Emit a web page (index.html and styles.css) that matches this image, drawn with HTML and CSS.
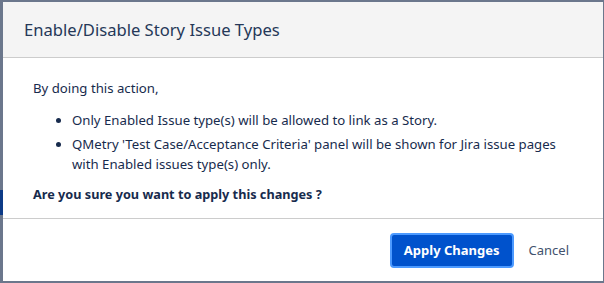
FILE: index.html
```html
<!DOCTYPE html>
<html lang="en">
<head>
    <meta charset="UTF-8">
    <meta name="viewport" content="width=device-width, initial-scale=1.0">
    <title>Enable/Disable Story Issue Types</title>
    <link rel="stylesheet" href="styles.css">
</head>
<body>

<div class="backdrop">
    <div class="backdrop-bar"></div>
    <div class="dialog">
        <div class="dialog-header">
            <h2>Enable/Disable Story Issue Types</h2>
        </div>
        <div class="dialog-body">
            <p>By doing this action,</p>
            <ul>
                <li>Only Enabled Issue type(s) will be allowed to link as a Story.</li>
                <li>QMetry 'Test Case/Acceptance Criteria' panel will be shown for Jira issue pages with Enabled issues type(s) only.</li>
            </ul>
            <p class="confirm">Are you sure you want to apply this changes ?</p>
        </div>
        <div class="dialog-footer">
            <button class="btn-primary">Apply Changes</button>
            <button class="btn-link">Cancel</button>
        </div>
    </div>
</div>

</body>
</html>
```

FILE: styles.css
```css
body {
    margin: 0;
    font-family: "Noto Sans", sans-serif;
    background-color: #6b778c;
    color: #172b4d;
}
.backdrop {
    position: relative;
    height: 283px;
    padding: 2px 1px 0 3px;
    box-sizing: border-box;
}
.backdrop-bar {
    position: absolute;
    left: 0;
    top: 190px;
    width: 3px;
    height: 25px;
    background: #0d3b87;
}
.dialog {
    width: 600px;
    height: 279px;
    background: #fff;
    display: flex;
    flex-direction: column;
}
.dialog-header {
    height: 55px;
    background: #f4f4f4;
    border-bottom: 1px solid #cccccc;
    display: flex;
    align-items: center;
    padding: 0 21px;
}
.dialog-header h2 {
    margin: 0;
    font-size: 16.6px;
    font-weight: normal;
    color: #253858;
}
.dialog-body {
    height: 161px;
    box-sizing: border-box;
    padding: 20px 30px 0 30px;
    font-size: 13.2px;
    line-height: 20px;
    border-bottom: 1px solid #cccccc;
}
.dialog-body p {
    margin: 0;
}
.dialog-body ul {
    margin: 12px 0 10px 0;
    padding-left: 39px;
}
.dialog-body li {
    margin-bottom: 4px;
}
.dialog-body li:last-child {
    margin-bottom: 0;
}
.confirm {
    font-weight: bold;
    font-size: 12.7px;
}
.dialog-footer {
    flex: 1;
    display: flex;
    justify-content: flex-end;
    align-items: center;
    padding-right: 30px;
    gap: 11px;
}
.btn-primary {
    background: #0052cc;
    color: #fff;
    border: 2px solid #4c9aff;
    border-radius: 4px;
    height: 35px;
    padding: 0 12px;
    font-family: inherit;
    font-size: 13px;
    font-weight: bold;
}
.btn-link {
    background: none;
    border: none;
    color: #42526e;
    font-family: inherit;
    font-size: 13px;
    padding: 0 4px;
}
```
